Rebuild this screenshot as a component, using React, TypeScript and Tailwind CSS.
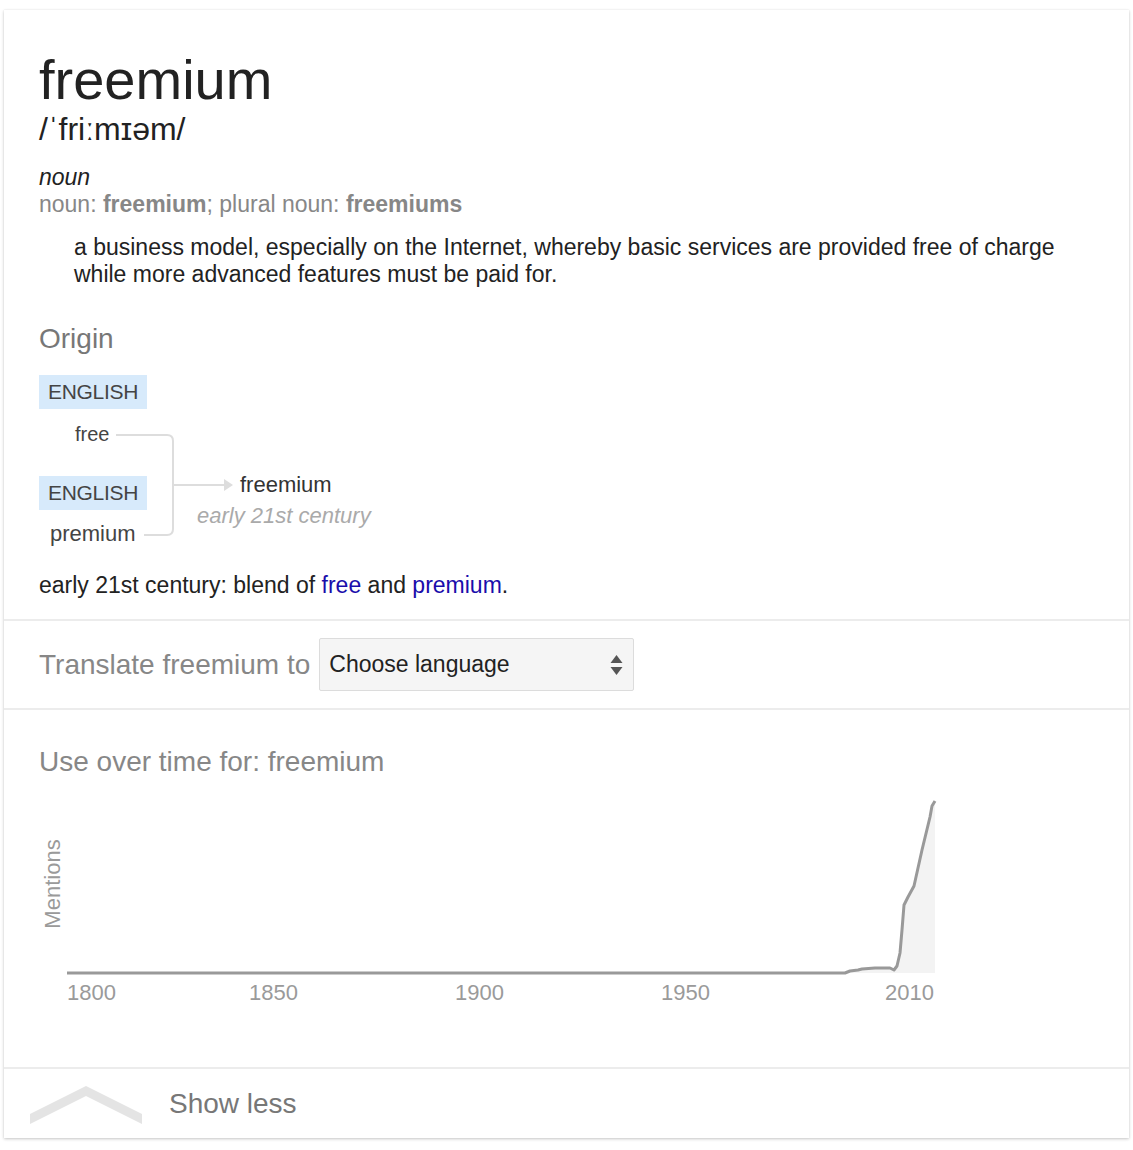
import React from "react";

const curve: [number, number][] = [
  [28, 184], [806, 184], [811, 182], [819, 181], [823, 180], [836, 179], [851, 179],
  [855, 181], [858, 177], [861, 164], [863, 141], [865, 116], [869, 108], [875, 97],
  [883, 61], [891, 28], [893, 17], [896, 12],
];

function Chart() {
  const line = curve.map((p) => p.join(",")).join(" ");
  const area = line + " 896,184 28,184";
  const years: [string, number][] = [["1800", 28], ["1850", 210], ["1900", 416], ["1950", 622], ["2010", 846]];
  return (
    <svg width="900" height="230" viewBox="0 0 900 230" className="block mt-[11px]">
      <polygon points={area} fill="#f3f3f3" />
      <polyline points={line} fill="none" stroke="#999999" strokeWidth="3" strokeLinejoin="round" />
      <text
        x="13"
        y="95"
        transform="rotate(-90 13 95)"
        textAnchor="middle"
        dominantBaseline="central"
        fontFamily="'Liberation Sans', Arial, sans-serif"
        fontSize="22"
        fill="#9a9a9a"
      >
        Mentions
      </text>
      {years.map(([y, x]) => (
        <text key={y} x={x} y="211" fontFamily="'Liberation Sans', Arial, sans-serif" fontSize="22" fill="#9a9a9a">
          {y}
        </text>
      ))}
    </svg>
  );
}

function Diagram() {
  return (
    <div className="relative mt-[20px] h-[175px] w-[340px] text-[#444]">
      <svg width="340" height="175" viewBox="0 0 340 175" className="absolute left-0 top-0">
        <path d="M77 60 H128 Q134 60 134 66 V154 Q134 160 128 160 H105" fill="none" stroke="#dddddd" strokeWidth="2" />
        <path d="M134 110 H186" fill="none" stroke="#dddddd" strokeWidth="2" />
        <polygon points="185,104 194,110 185,116" fill="#dddddd" />
      </svg>
      <div className="absolute left-0 top-0 w-[108px] h-[34px] bg-[#d7eafb] flex items-center justify-center text-[21px] leading-[34px] tracking-[-0.3px]">
        ENGLISH
      </div>
      <div className="absolute left-[36px] top-[46px] text-[20px] leading-[26px]">free</div>
      <div className="absolute left-0 top-[101px] w-[108px] h-[34px] bg-[#d7eafb] flex items-center justify-center text-[21px] leading-[34px] tracking-[-0.3px]">
        ENGLISH
      </div>
      <div className="absolute left-[11px] top-[146px] text-[22px] leading-[26px]">premium</div>
      <div className="absolute left-[201px] top-[97px] text-[22px] leading-[26px] text-[#333]">freemium</div>
      <div className="absolute left-[158px] top-[128px] text-[22px] leading-[26px] italic text-[#aaaaaa]">
        early 21st century
      </div>
    </div>
  );
}

export default function App() {
  return (
    <div className="min-h-[1150px] bg-white pt-[10px] pl-[4px]" style={{ fontFamily: "'Liberation Sans', Arial, sans-serif" }}>
      <div className="w-[1125px] bg-white shadow-[0_1px_3px_rgba(0,0,0,0.22),0_0_1px_rgba(0,0,0,0.08)]">
        <div className="pt-[39px] px-[35px] pb-[20px]">
          <h1 className="text-[56px] leading-[62px] text-[#222]">freemium</h1>
          <div className="text-[32px] leading-[36px] text-[#222]">/ˈfriːmɪəm/</div>
          <div className="mt-[17px] text-[23px] leading-[27px] italic text-[#222]">noun</div>
          <div className="text-[23px] leading-[27px] text-[#878787]">
            noun: <b>freemium</b>; plural noun: <b>freemiums</b>
          </div>
          <div className="mt-[16px] pl-[35px] text-[23px] leading-[27px] text-[#222]">
            a business model, especially on the Internet, whereby basic services are provided free of charge while more
            advanced features must be paid for.
          </div>
          <div className="mt-[35px] text-[28px] leading-[32px] text-[#777]">Origin</div>
          <Diagram />
          <div className="mt-[22px] text-[23px] leading-[27px] text-[#222]">
            early 21st century: blend of <span className="text-[#1a0dab]">free</span> and{" "}
            <span className="text-[#1a0dab]">premium</span>.
          </div>
        </div>
        <div className="border-t-[2px] border-[#ececec] px-[35px] py-[17px] flex items-center gap-[9px]">
          <span className="text-[28px] leading-[32px] text-[#878787]">Translate freemium to</span>
          <div className="w-[315px] h-[53px] bg-[#f5f5f5] border border-[#dcdcdc] rounded-[2px] flex items-center justify-between pl-[9px] pr-[10px]">
            <span className="text-[23px] text-[#222]">Choose language</span>
            <svg width="13" height="22" viewBox="0 0 13 22">
              <polygon points="6.5,1 12.5,9 0.5,9" fill="#555" />
              <polygon points="0.5,13 12.5,13 6.5,21" fill="#555" />
            </svg>
          </div>
        </div>
        <div className="border-t-[2px] border-[#ececec] px-[35px] pt-[36px] pb-[48px]">
          <div className="text-[28px] leading-[32px] text-[#878787]">Use over time for: freemium</div>
          <Chart />
        </div>
        <div className="border-t-[2px] border-[#ececec] h-[71px] flex items-center pl-[26px]">
          <svg width="112" height="38" viewBox="0 0 112 38" className="mt-[2px]">
            <polygon points="0,28 56,0 112,28 112,38 56,10 0,38" fill="#e4e4e4" />
          </svg>
          <span className="ml-[27px] text-[28px] leading-[32px] text-[#777]">Show less</span>
        </div>
      </div>
    </div>
  );
}
